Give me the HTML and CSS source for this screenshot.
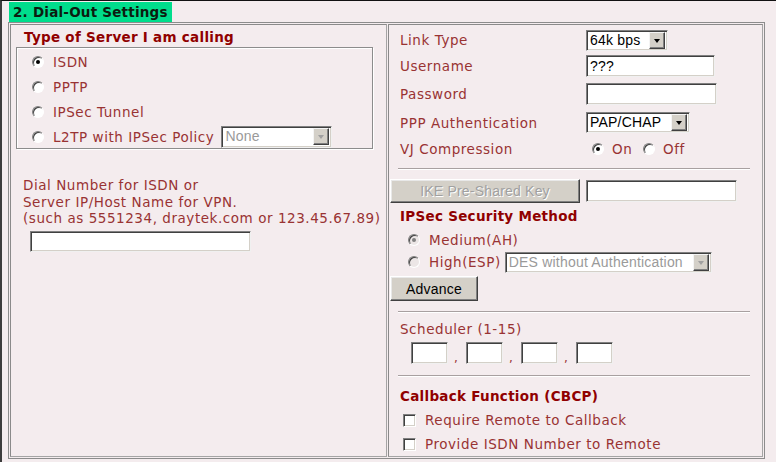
FILE: index.html
```html
<!DOCTYPE html>
<html>
<head>
<meta charset="utf-8">
<link rel="stylesheet" href="styles.css">
</head>
<body>
<div class="page">
  <div class="hdr">2. Dial-Out Settings</div>
  <div class="tbl">
    <div class="cell left">
      <div class="title t-left">Type of Server I am calling</div>
      <div class="box">
        <div class="rrow"><span class="rb on"></span><span class="rl">ISDN</span></div>
        <div class="rrow"><span class="rb"></span><span class="rl">PPTP</span></div>
        <div class="rrow"><span class="rb"></span><span class="rl">IPSec Tunnel</span></div>
        <div class="rrow"><span class="rb"></span><span class="rl">L2TP with IPSec Policy</span>
          <span class="sel dis w-none"><span class="sv">None</span><span class="arr"></span></span></div>
      </div>
      <div class="dial">Dial Number for ISDN or<br>Server IP/Host Name for VPN.<br>(such as 5551234, draytek.com or 123.45.67.89)</div>
      <div class="inp w-dial"></div>
    </div>
    <div class="cell right">
      <div class="frow h1"><span class="lab">Link Type</span><span class="sel w-link"><span class="sv">64k bps</span><span class="arr"></span></span></div>
      <div class="frow h2"><span class="lab">Username</span><span class="inp w-user"><span class="iv">???</span></span></div>
      <div class="frow h3"><span class="lab">Password</span><span class="inp w-pass"></span></div>
      <div class="frow h4"><span class="lab">PPP Authentication</span><span class="sel w-ppp"><span class="sv">PAP/CHAP</span><span class="arr"></span></span></div>
      <div class="frow h5"><span class="lab">VJ Compression</span><span class="vj"><span class="rb on"></span><span class="vjl vj-on">On</span><span class="rb"></span><span class="vjl">Off</span></span></div>
      <div class="hr hr1"></div>
      <div class="ike"><span class="btn dis w-ike">IKE Pre-Shared Key</span><span class="inp w-ike-in"></span></div>
      <div class="title t-ipsec">IPSec Security Method</div>
      <div class="mrow mrow-first"><span class="rb dis on"></span><span class="rl2">Medium(AH)</span></div>
      <div class="mrow"><span class="rb dis"></span><span class="rl2">High(ESP)</span>
        <span class="sel dis w-des"><span class="sv">DES without Authentication</span><span class="arr"></span></span></div>
      <div class="adv"><span class="btn w-adv">Advance</span></div>
      <div class="hr hr2"></div>
      <div class="slab">Scheduler (1-15)</div>
      <div class="sched">
        <span class="inp w-s"></span><span class="comma">,</span>
        <span class="inp w-s"></span><span class="comma">,</span>
        <span class="inp w-s"></span><span class="comma">,</span>
        <span class="inp w-s"></span>
      </div>
      <div class="hr hr3"></div>
      <div class="title t-cb">Callback Function (CBCP)</div>
      <div class="crow crow-first"><span class="cb"></span><span class="cl">Require Remote to Callback</span></div>
      <div class="crow"><span class="cb"></span><span class="cl">Provide ISDN Number to Remote</span></div>
    </div>
  </div>
</div>
</body>
</html>
```

FILE: styles.css
```css
* { box-sizing: border-box; }
html, body { margin: 0; padding: 0; }
body {
  background: #f4ecee;
  font-family: "DejaVu Sans", Verdana, sans-serif;
  font-size: 13.5px;
  letter-spacing: 0.55px;
  color: #993333;
  overflow: hidden;
}
.page {
  width: 776px;
  height: 462px;
  border-top: 1px solid #111;
  border-left: 2px solid #3c3c3c;
  padding: 1px 0 0 6px;
}
.hdr {
  margin-left: 1px;
  width: 163px;
  height: 20px;
  background: #00dd8c;
  color: #0c1c10;
  font-weight: bold;
  letter-spacing: 0.22px;
  line-height: 20px;
  padding-left: 4px;
  white-space: nowrap;
  overflow: hidden;
}
.tbl {
  width: 757px;
  height: 437px;
  border: 1px solid #8c8c8c;
  padding: 1px;
  display: grid;
  grid-template-columns: 377px 1fr;
  gap: 1px;
}
.cell {
  border: 1px solid #a4a4a4;
  border-top-color: #8a8a8a;
  border-left-color: #8a8a8a;
  white-space: nowrap;
}
.title { font-weight: bold; color: #900000; letter-spacing: 0.28px; line-height: 16px; height: 16px; }
.t-left { margin: 4px 0 0 13px; }
.box {
  margin: 2px 0 0 5px;
  width: 357px;
  height: 102px;
  border: 1px solid #8c8c8c;
  box-shadow: inset 1px 1px 0 #fff, 1px 1px 0 #fff;
  padding-top: 1px;
}
.rrow { height: 25px; display: flex; align-items: center; padding-left: 15px; }
.rl { margin-left: 9px; }
.rb {
  display: inline-block;
  position: relative;
  width: 12px;
  height: 12px;
  border-radius: 50%;
  border: 1px solid;
  border-color: #808080 #fff #fff #808080;
  background: #fff;
  box-shadow: inset 1px 1px 0 #404040;
  flex: none;
}
.rb.on::after {
  content: "";
  position: absolute;
  left: 3px; top: 3px;
  width: 4px; height: 4px;
  border-radius: 50%;
  background: #000;
}
.rb.dis { background: #ece6e6; }
.rb.dis.on::after { background: #808080; }

.sel, .inp {
  display: inline-flex;
  align-items: center;
  background: #fff;
  border: 1px solid;
  border-color: #808080 #f0f0f0 #f0f0f0 #808080;
  box-shadow: inset 1px 1px 0 #404040, inset -1px -1px 0 #d4d0c8;
  font-family: "Liberation Sans", Arial, sans-serif;
  font-size: 14px;
  letter-spacing: 0.2px;
  color: #000;
  flex: none;
}
.sel { height: 21px; padding: 2px; justify-content: space-between; overflow: hidden; }
.inp { height: 22px; }
.sv { padding-left: 1px; line-height: 15px; }
.iv { padding-left: 3px; }
.arr {
  width: 16px;
  height: 17px;
  background: #d4d0c8;
  border: 1px solid;
  border-color: #f4f4f4 #404040 #404040 #f4f4f4;
  box-shadow: inset -1px -1px 0 #808080;
  position: relative;
  flex: none;
}
.arr::after {
  content: "";
  position: absolute;
  left: 4px; top: 6px;
  border-left: 3.5px solid transparent;
  border-right: 3.5px solid transparent;
  border-top: 4px solid #000;
}
.sel.dis .sv { color: #9a9a9a; }
.sel.dis .arr::after { border-top-color: #a0a0a0; }
.w-none { width: 111px; height: 22px; margin-left: 7px; }

.dial { margin: 28px 0 0 12px; line-height: 16.5px; }
.w-dial { display: flex; margin: 4px 0 0 19px; width: 221px; height: 21px; }

.right { padding-top: 2px; }
.frow { display: flex; align-items: center; }
.lab { width: 186px; margin-left: 11px; flex: none; }
.h1 { height: 26px; }
.h2 { height: 26px; }
.h3 { height: 30px; }
.h4 { height: 27px; }
.h5 { height: 26px; }
.w-link { width: 82px; }
.w-user { width: 129px; }
.w-pass { width: 131px; }
.w-ppp { width: 104px; }
.vj { display: flex; align-items: center; padding-left: 6px; }
.vjl { margin-left: 8px; }
.vj-on { width: 31px; }

.hr { margin-left: 9px; width: 352px; height: 2px; border-top: 1px solid #a8a0a0; border-bottom: 1px solid #fff; }
.hr1 { margin-top: 6px; }
.ike { display: flex; align-items: center; margin: 9px 0 0 1px; height: 24px; }
.btn {
  display: inline-flex;
  align-items: center;
  justify-content: center;
  background: #d4d0c8;
  border: 1px solid;
  border-color: #fff #404040 #404040 #fff;
  box-shadow: inset -1px -1px 0 #808080, inset 1px 1px 0 #e8e8e8;
  font-family: "Liberation Sans", Arial, sans-serif;
  font-size: 14px;
  letter-spacing: 0.2px;
  color: #000;
}
.btn.dis { color: #a0a0a0; text-shadow: 1px 1px 0 #fff; }
.w-ike { width: 190px; height: 24px; }
.w-ike-in { width: 151px; margin-left: 6px; }
.t-ipsec { margin: 5px 0 0 11px; }
.mrow { height: 22px; display: flex; align-items: center; padding-left: 19px; }
.mrow-first { margin-top: 5px; }
.rl2 { margin-left: 9px; }
.w-des { width: 207px; margin-left: 4px; }
.adv { margin: 3px 0 0 1px; height: 25px; }
.w-adv { width: 88px; height: 25px; }
.hr2 { margin-top: 10px; }
.slab { margin: 8px 0 0 11px; line-height: 16px; }
.sched { display: flex; align-items: flex-end; margin: 5px 0 0 22px; height: 22px; }
.w-s { width: 37px; }
.comma { width: 18px; padding-left: 6px; line-height: 12px; font-size: 12px; }
.hr3 { margin-top: 11px; }
.t-cb { margin: 11px 0 0 11px; }
.crow { height: 24px; display: flex; align-items: center; padding-left: 14px; }
.crow-first { margin-top: 4px; }
.cb {
  width: 13px; height: 13px;
  background: #fff;
  border: 1px solid;
  border-color: #808080 #fff #fff #808080;
  box-shadow: inset 1px 1px 0 #404040, inset -1px -1px 0 #d4d0c8;
  flex: none;
}
.cl { margin-left: 9px; }
```
